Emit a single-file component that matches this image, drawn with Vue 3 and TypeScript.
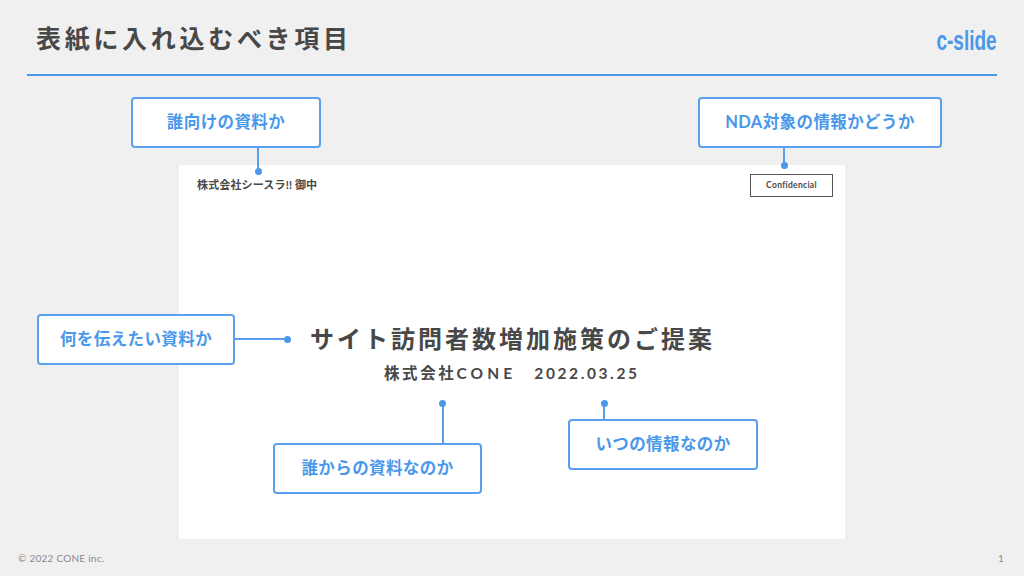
<script setup lang="ts">
interface Callout {
  id: string
  text: string
}
const callouts: Callout[] = [
  { id: 'who', text: '誰向けの資料か' },
  { id: 'nda', text: 'NDA対象の情報かどうか' },
  { id: 'what', text: '何を伝えたい資料か' },
  { id: 'from', text: '誰からの資料なのか' },
  { id: 'when', text: 'いつの情報なのか' },
]
</script>

<template>
  <div class="page">
    <header class="header">
      <h1 class="title">表紙に入れ込むべき項目</h1>
      <span class="logo">c-slide</span>
    </header>
    <main class="stage">
      <section class="slide">
        <div class="slide-top">
          <span class="client">株式会社シースラ!! 御中</span>
          <span class="confidential">Confidencial</span>
        </div>
        <div class="slide-center">
          <h2 class="slide-title">サイト訪問者数増加施策のご提案</h2>
          <p class="slide-sub">株式会社<span class="cone">CONE</span>　2022.03.25</p>
        </div>
      </section>
      <div v-for="c in callouts" :key="c.id" class="callout" :class="`callout-${c.id}`">
        <span class="callout-text">{{ c.text }}</span>
        <i class="link"></i>
        <i class="dot"></i>
      </div>
    </main>
    <footer class="footer">
      <span>© 2022 CONE inc.</span>
      <span>1</span>
    </footer>
  </div>
</template>

<style>
html, body { margin: 0; padding: 0; }
</style>

<style scoped>
.page {
  width: 1024px;
  height: 576px;
  background: #f0f0f0;
  display: flex;
  flex-direction: column;
  overflow: hidden;
  font-family: "Lato", "Noto Sans CJK JP", sans-serif;
  color: #484848;
}
.header {
  box-sizing: border-box;
  height: 76px;
  margin: 0 27px;
  padding: 0 0 0 9px;
  border-bottom: 2px solid #4a98ea;
  display: flex;
  justify-content: space-between;
  align-items: center;
}
.title {
  margin: 0;
  padding-top: 1px;
  font-size: 25px;
  font-weight: 700;
  letter-spacing: 3.7px;
  line-height: 76px;
}
.logo {
  font-family: "Liberation Sans", sans-serif;
  font-weight: 700;
  font-size: 28px;
  line-height: 76px;
  padding-top: 7px;
  color: #4a98ea;
  transform: scaleX(0.68);
  transform-origin: right center;
}
.stage {
  position: relative;
  flex: 1;
  padding: 89px 179px 0;
}
.slide {
  width: 666px;
  height: 374px;
  background: #fff;
  position: relative;
  display: flex;
  flex-direction: column;
}
.slide-top {
  display: flex;
  justify-content: space-between;
  align-items: flex-start;
  padding: 9px 12px 0 18px;
}
.client {
  font-size: 11px;
  font-weight: 700;
  letter-spacing: 0.15px;
  line-height: 22px;
}
.confidential {
  box-sizing: border-box;
  width: 83px;
  height: 23px;
  border: 1px solid #555;
  font-size: 8.5px;
  font-weight: 700;
  line-height: 21px;
  text-align: center;
  letter-spacing: 0.3px;
}
.slide-center {
  padding-top: 124px;
  padding-left: 131px;
}
.slide-title {
  margin: 0;
  font-size: 24px;
  font-weight: 700;
  letter-spacing: 3px;
  line-height: 36px;
}
.slide-sub {
  margin: 4px 0 0 74px;
  font-size: 15.5px;
  font-weight: 700;
  letter-spacing: 2.6px;
  line-height: 24px;
  white-space: pre;
}
.cone {
  letter-spacing: 4.1px;
}
.callout {
  position: absolute;
  box-sizing: border-box;
  height: 51px;
  background: #fff;
  border: 2px solid #5ba0ee;
  border-radius: 4px;
  color: #4a98ea;
  font-size: 16.5px;
  font-weight: 700;
  letter-spacing: 0.4px;
  display: flex;
  align-items: center;
  justify-content: center;
  white-space: nowrap;
}
.callout-text {
  padding-bottom: 4px;
}
.link {
  position: absolute;
  background: #5ba0ee;
}
.dot {
  position: absolute;
  width: 7px;
  height: 7px;
  border-radius: 50%;
  background: #4a98ea;
}
.callout-who { left: 131px; top: 21px; width: 190px; }
.callout-who .link { left: 124px; top: 49px; width: 2px; height: 22px; }
.callout-who .dot { left: 121.5px; top: 68.5px; }
.callout-nda { left: 698px; top: 21px; width: 244px; }
.callout-nda .link { left: 83px; top: 49px; width: 2px; height: 16px; }
.callout-nda .dot { left: 80.5px; top: 62.5px; }
.callout-what { left: 37px; top: 238px; width: 198px; }
.callout-what .link { left: 196px; top: 22px; width: 52px; height: 2px; }
.callout-what .dot { left: 245px; top: 19.5px; }
.callout-from { left: 273px; top: 367px; width: 209px; }
.callout-from .link { left: 166.5px; top: -41px; width: 2px; height: 41px; }
.callout-from .dot { left: 164px; top: -45.5px; }
.callout-when { left: 568px; top: 343px; width: 190px; }
.callout-when .link { left: 33px; top: -17px; width: 2px; height: 17px; }
.callout-when .dot { left: 30.5px; top: -21.5px; }
.footer {
  height: 0;
  position: relative;
  display: flex;
  justify-content: space-between;
  padding: 0 20px 0 18px;
  font-size: 10px;
  letter-spacing: 0.25px;
  color: #8a8a8a;
  line-height: 14px;
  transform: translateY(-25px);
}
</style>
